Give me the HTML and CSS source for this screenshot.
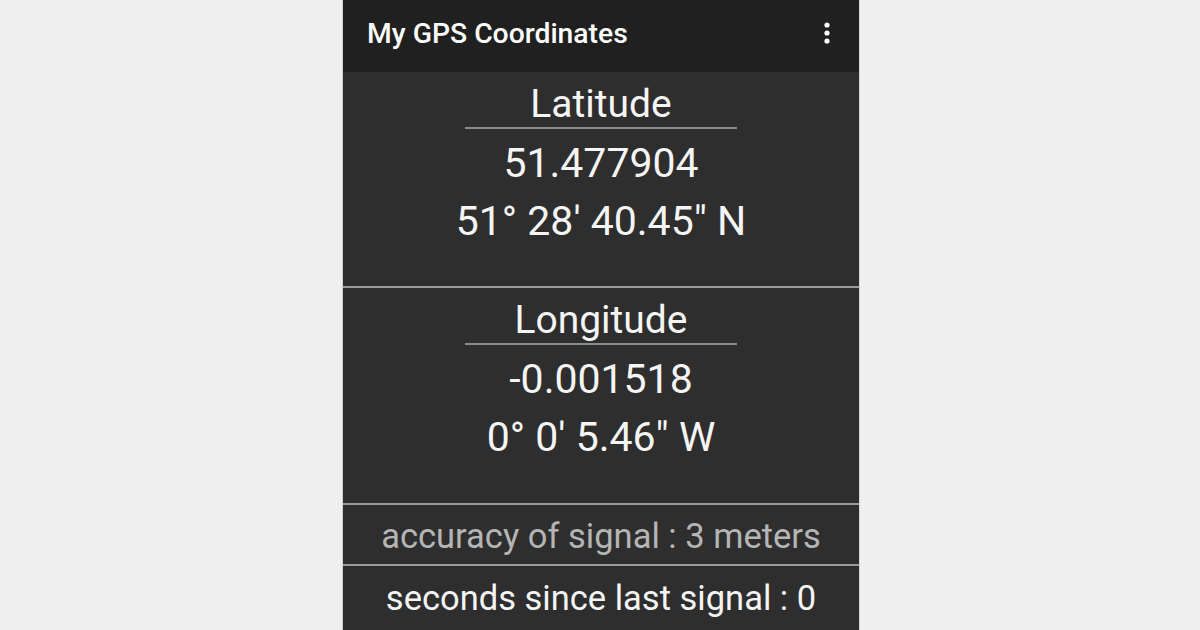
FILE: index.html
```html
<!DOCTYPE html>
<html lang="en">
<head>
<meta charset="utf-8">
<title>My GPS Coordinates</title>
<link rel="stylesheet" href="styles.css">
</head>
<body>
<div class="phone">
  <header class="appbar">
    <span class="title">My GPS Coordinates</span>
    <span class="menu" aria-label="More options">
      <svg width="6" height="22" viewBox="0 0 6 22"><circle cx="3" cy="3" r="2.6" fill="#fff"/><circle cx="3" cy="11" r="2.6" fill="#fff"/><circle cx="3" cy="19" r="2.6" fill="#fff"/></svg>
    </span>
  </header>
  <section class="coord coord-lat">
    <div class="label">Latitude</div>
    <div class="value">51.477904</div>
    <div class="value">51° 28' 40.45" N</div>
  </section>
  <section class="coord coord-lon">
    <div class="label">Longitude</div>
    <div class="value">-0.001518</div>
    <div class="value">0° 0' 5.46" W</div>
  </section>
  <div class="row accuracy">accuracy of signal : 3 meters</div>
  <div class="row seconds">seconds since last signal : 0</div>
</div>
</body>
</html>
```

FILE: styles.css
```css
html, body {
  margin: 0;
  padding: 0;
  height: 100%;
}
body {
  background: #efefef;
  font-family: Roboto, "Noto Sans", "Liberation Sans", sans-serif;
  overflow: hidden;
}
.phone {
  width: 516px;
  height: 630px;
  margin: 0 0 0 342px;
  border-left: 1px solid #cfcfcf;
  border-right: 1px solid #d6d6d6;
  background: #2e2e2e;
  display: flex;
  flex-direction: column;
  color: #f5f5f5;
}
.appbar {
  height: 72px;
  flex: none;
  background: #202020;
  display: flex;
  align-items: center;
  justify-content: space-between;
  padding: 0 29px 6px 24px;
  box-sizing: border-box;
}
.title {
  font-size: 28.3px;
  font-weight: 500;
  color: #ffffff;
}
.menu {
  display: flex;
  align-items: center;
}
.coord {
  display: flex;
  flex-direction: column;
  align-items: center;
  padding-top: 9px;
  border-bottom: 2px solid #9a9a9a;
}
.coord-lat {
  padding-bottom: 36px;
}
.coord-lon {
  padding-bottom: 37px;
}
.label {
  width: 272px;
  text-align: center;
  font-size: 39px;
  line-height: 46px;
  border-bottom: 2px solid #8a8a8a;
  margin-bottom: 5px;
}
.value {
  font-size: 41px;
  line-height: 58px;
  text-align: center;
}
.row {
  text-align: center;
  font-size: 34.5px;
}
.accuracy {
  color: #b5b5b5;
  line-height: 55px;
  padding-top: 4px;
  border-bottom: 2px solid #9a9a9a;
}
.seconds {
  color: #f5f5f5;
  line-height: 64px;
}
```
